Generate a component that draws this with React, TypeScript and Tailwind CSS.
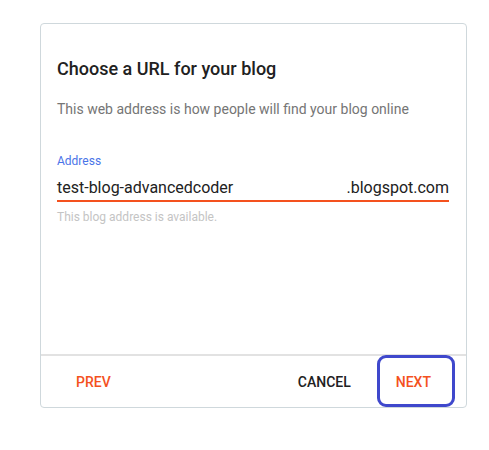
import React from 'react';

// Blogger "choose a URL" step, with the hand-drawn highlight round NEXT

const ORANGE = '#f4511e';

export default function App() {
  return (
    <div className="min-h-[450px] bg-white pt-[23px] pl-[40px]" style={{ fontFamily: 'Roboto, "Liberation Sans", sans-serif' }}>
      <div className="w-[427px] h-[385px] border border-[#cfd8dc] rounded flex flex-col bg-white">
        {/* Body */}
        <div className="flex-1 px-[16px] pt-[31px]">
          <h1 className="text-[18px] leading-[28px] font-medium text-[#212121]">Choose a URL for your blog</h1>
          <p className="mt-[16px] text-[14px] leading-[20px] text-[#757575]">
            This web address is how people will find your blog online
          </p>

          <div className="mt-[34px] pr-[1px]">
            <label className="block text-[12px] leading-[16px] text-[#4a74e8]">Address</label>
            <div className="mt-[7px] flex items-end justify-between border-b-2 border-[#f4511e] text-[16px] leading-[24px] text-[#212121]">
              <span>test-blog-advancedcoder</span>
              <span>.blogspot.com</span>
            </div>
            <p className="mt-[7px] text-[12px] leading-[16px] text-[#c4c4c4]">This blog address is available.</p>
          </div>
        </div>

        {/* Footer */}
        <div className="h-[53px] border-t-2 border-[#e2e2e2] px-[19px] flex items-center">
          <button className="px-[16px] text-[14px] leading-[20px] font-medium uppercase" style={{ color: ORANGE }}>
            Prev
          </button>
          <div className="flex-1" />
          <button className="px-[16px] mr-[13px] text-[14px] leading-[20px] font-medium uppercase text-[#212121]">
            Cancel
          </button>
          <button className="relative px-[16px] text-[14px] leading-[20px] font-medium uppercase" style={{ color: ORANGE }}>
            Next
            {/* annotation box */}
            <span className="absolute left-[-3px] right-[-8px] top-[-17px] bottom-[-15px] border-[3px] border-[#3f48cc] rounded-[9px] pointer-events-none" />
          </button>
        </div>
      </div>
    </div>
  );
}
